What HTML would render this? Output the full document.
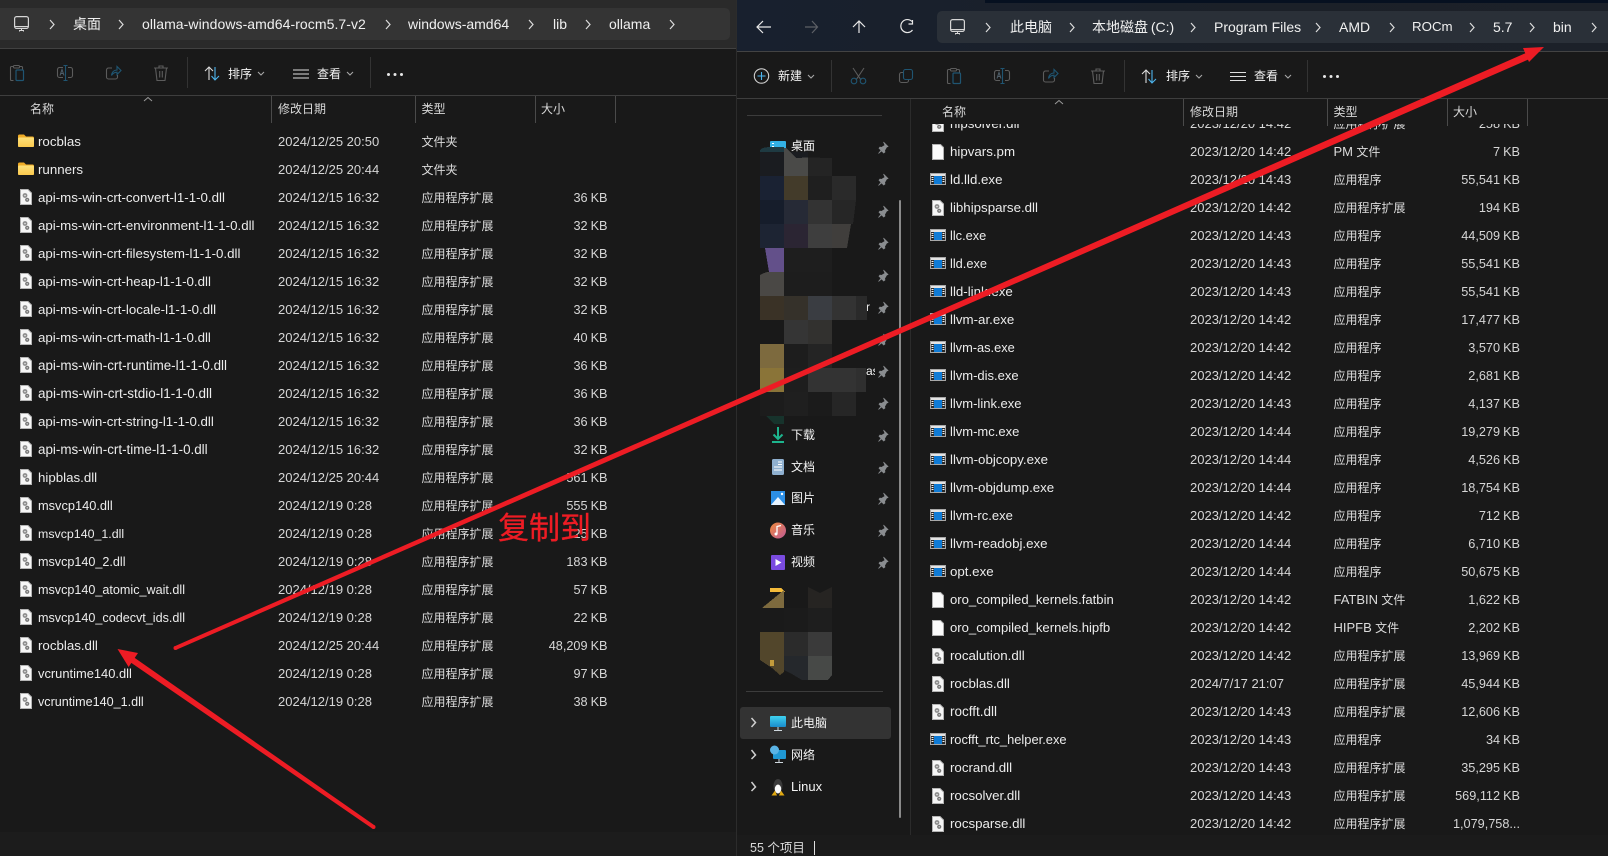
<!DOCTYPE html>
<html><head><meta charset="utf-8"><title>Explorer</title>
<style>
*{box-sizing:border-box}
html,body{margin:0;padding:0;width:1608px;height:856px;overflow:hidden;background:#191919}
body{position:relative;font:13px "Liberation Sans","Noto Sans CJK SC",sans-serif;color:#e8e8e8}
.b{position:absolute}
.t{position:absolute;white-space:nowrap;line-height:20px;height:20px}
.z{font-size:14px;color:#f0f0f0}
.h{font-size:12px;color:#d8d8d8}
.tb{font-size:12px;color:#f4f4f4}
.sep{position:absolute;width:1px;background:#4a4a4a}
.list{position:absolute;overflow:hidden}
.r{position:absolute;left:0;right:0;height:28px;line-height:28px;white-space:nowrap}
.r span{position:absolute;top:0}
.r b{font-weight:400;font-size:13px}
.n{color:#ececec;font-size:13.3px}
.d{color:#d6d6d6;font-size:13px}
.y{color:#dcdcdc;font-size:12px}
.s{color:#d6d6d6;font-size:12.7px;word-spacing:-.5px;text-align:right;width:120px}
#L .n{left:38px}#L .d{left:278px}#L .y{left:421.5px}#L .s{left:487.5px}
#R .n{left:950px}#R .d{left:1190px}#R .y{left:1333.5px}#R .s{left:1400px}
.nav{font-size:12px;color:#f4f4f4}
svg#o{position:absolute;left:0;top:0;z-index:5}
</style></head><body>

<!-- LEFT WINDOW -->
<div class="b" style="left:0;top:0;width:737px;height:48px;background:#2a2a2a"></div>
<div class="b" style="left:0;top:8px;width:730px;height:32px;background:#343434;border-radius:0 5px 5px 0"></div>
<div class="b" style="left:0;top:48px;width:737px;height:1px;background:#414141"></div>
<div class="b" style="left:0;top:95px;width:737px;height:1px;background:#3e3e3e"></div>
<div class="b" style="left:0;top:832px;width:736px;height:24px;background:#1c1c1c"></div>
<div class="t z" style="left:73px;top:14px">桌面</div>
<div class="t z" style="left:142px;top:14px;letter-spacing:.07px">ollama-windows-amd64-rocm5.7-v2</div>
<div class="t z" style="left:408px;top:14px">windows-amd64</div>
<div class="t z" style="left:553px;top:14px">lib</div>
<div class="t z" style="left:609px;top:14px">ollama</div>
<div class="t tb" style="left:228px;top:64px">排序</div>
<div class="t tb" style="left:317px;top:64px">查看</div>
<div class="t h" style="left:30px;top:99px">名称</div>
<div class="t h" style="left:278px;top:99px">修改日期</div>
<div class="t h" style="left:421.5px;top:99px">类型</div>
<div class="t h" style="left:541px;top:99px">大小</div>
<div class="sep" style="left:271px;top:96px;height:27px"></div>
<div class="sep" style="left:415px;top:96px;height:27px"></div>
<div class="sep" style="left:535px;top:96px;height:27px"></div>
<div class="sep" style="left:615px;top:96px;height:27px"></div>

<div class="list" id="L" style="left:0;top:128px;width:736px;height:700px">
<div class="r" style="top:0"><span class="n">rocblas</span><span class="d">2024/12/25 20:50</span><span class="y">文件夹</span></div>
<div class="r" style="top:28px"><span class="n">runners</span><span class="d">2024/12/25 20:44</span><span class="y">文件夹</span></div>
<div class="r" style="top:56px"><span class="n">api-ms-win-crt-convert-l1-1-0.dll</span><span class="d">2024/12/15 16:32</span><span class="y">应用程序扩展</span><span class="s">36 KB</span></div>
<div class="r" style="top:84px"><span class="n">api-ms-win-crt-environment-l1-1-0.dll</span><span class="d">2024/12/15 16:32</span><span class="y">应用程序扩展</span><span class="s">32 KB</span></div>
<div class="r" style="top:112px"><span class="n">api-ms-win-crt-filesystem-l1-1-0.dll</span><span class="d">2024/12/15 16:32</span><span class="y">应用程序扩展</span><span class="s">32 KB</span></div>
<div class="r" style="top:140px"><span class="n">api-ms-win-crt-heap-l1-1-0.dll</span><span class="d">2024/12/15 16:32</span><span class="y">应用程序扩展</span><span class="s">32 KB</span></div>
<div class="r" style="top:168px"><span class="n">api-ms-win-crt-locale-l1-1-0.dll</span><span class="d">2024/12/15 16:32</span><span class="y">应用程序扩展</span><span class="s">32 KB</span></div>
<div class="r" style="top:196px"><span class="n">api-ms-win-crt-math-l1-1-0.dll</span><span class="d">2024/12/15 16:32</span><span class="y">应用程序扩展</span><span class="s">40 KB</span></div>
<div class="r" style="top:224px"><span class="n" style="font-size:13.4px">api-ms-win-crt-runtime-l1-1-0.dll</span><span class="d">2024/12/15 16:32</span><span class="y">应用程序扩展</span><span class="s">36 KB</span></div>
<div class="r" style="top:252px"><span class="n" style="font-size:13.5px">api-ms-win-crt-stdio-l1-1-0.dll</span><span class="d">2024/12/15 16:32</span><span class="y">应用程序扩展</span><span class="s">36 KB</span></div>
<div class="r" style="top:280px"><span class="n">api-ms-win-crt-string-l1-1-0.dll</span><span class="d">2024/12/15 16:32</span><span class="y">应用程序扩展</span><span class="s">36 KB</span></div>
<div class="r" style="top:308px"><span class="n" style="font-size:13.4px">api-ms-win-crt-time-l1-1-0.dll</span><span class="d">2024/12/15 16:32</span><span class="y">应用程序扩展</span><span class="s">32 KB</span></div>
<div class="r" style="top:336px"><span class="n">hipblas.dll</span><span class="d">2024/12/25 20:44</span><span class="y">应用程序扩展</span><span class="s">561 KB</span></div>
<div class="r" style="top:364px"><span class="n" style="font-size:12.8px">msvcp140.dll</span><span class="d">2024/12/19 0:28</span><span class="y">应用程序扩展</span><span class="s">555 KB</span></div>
<div class="r" style="top:392px"><span class="n" style="font-size:12.4px">msvcp140_1.dll</span><span class="d">2024/12/19 0:28</span><span class="y">应用程序扩展</span><span class="s">25 KB</span></div>
<div class="r" style="top:420px"><span class="n" style="font-size:12.6px">msvcp140_2.dll</span><span class="d">2024/12/19 0:28</span><span class="y">应用程序扩展</span><span class="s">183 KB</span></div>
<div class="r" style="top:448px"><span class="n" style="font-size:12.6px">msvcp140_atomic_wait.dll</span><span class="d">2024/12/19 0:28</span><span class="y">应用程序扩展</span><span class="s">57 KB</span></div>
<div class="r" style="top:476px"><span class="n" style="font-size:12.6px">msvcp140_codecvt_ids.dll</span><span class="d">2024/12/19 0:28</span><span class="y">应用程序扩展</span><span class="s">22 KB</span></div>
<div class="r" style="top:504px"><span class="n">rocblas.dll</span><span class="d">2024/12/25 20:44</span><span class="y">应用程序扩展</span><span class="s">48,209 KB</span></div>
<div class="r" style="top:532px"><span class="n" style="font-size:12.9px">vcruntime140.dll</span><span class="d">2024/12/19 0:28</span><span class="y">应用程序扩展</span><span class="s">97 KB</span></div>
<div class="r" style="top:560px"><span class="n" style="font-size:12.6px">vcruntime140_1.dll</span><span class="d">2024/12/19 0:28</span><span class="y">应用程序扩展</span><span class="s">38 KB</span></div>
</div>

<!-- RIGHT WINDOW -->
<div class="b" style="left:736px;top:0;width:872px;height:856px;background:#191919;border-left:1px solid #2c2c2c"></div>
<div class="b" style="left:737px;top:0;width:871px;height:51px;background:linear-gradient(90deg,#18202e,#1b2028 60%,#1c2129)"></div>
<div class="b" style="left:985px;top:0;width:623px;height:3px;background:#061020"></div>
<div class="b" style="left:937px;top:11px;width:671px;height:32px;background:#2a3038;border-radius:5px 0 0 5px"></div>
<div class="b" style="left:737px;top:51px;width:871px;height:1px;background:#434343"></div>
<div class="b" style="left:737px;top:98px;width:871px;height:1px;background:#3e3e3e"></div>
<div class="b" style="left:910px;top:99px;width:1px;height:736px;background:#2b2b2b"></div>
<div class="t z" style="left:1010px;top:17px">此电脑</div>
<div class="t z" style="left:1092px;top:17px;word-spacing:-1px">本地磁盘 (C:)</div>
<div class="t z" style="left:1214px;top:17px">Program Files</div>
<div class="t z" style="left:1339px;top:17px">AMD</div>
<div class="t z" style="left:1412px;top:17px;font-size:13.3px">ROCm</div>
<div class="t z" style="left:1493px;top:17px">5.7</div>
<div class="t z" style="left:1553px;top:17px">bin</div>
<div class="t tb" style="left:778px;top:66px">新建</div>
<div class="t tb" style="left:1166px;top:66px">排序</div>
<div class="t tb" style="left:1254px;top:66px">查看</div>
<div class="t h" style="left:942px;top:102px">名称</div>
<div class="t h" style="left:1190px;top:102px">修改日期</div>
<div class="t h" style="left:1333.5px;top:102px">类型</div>
<div class="t h" style="left:1453px;top:102px">大小</div>
<div class="sep" style="left:1183px;top:99px;height:27px"></div>
<div class="sep" style="left:1327px;top:99px;height:27px"></div>
<div class="sep" style="left:1447px;top:99px;height:27px"></div>
<div class="sep" style="left:1527px;top:99px;height:27px"></div>

<!-- sidebar -->
<div class="b" style="left:747px;top:115px;width:135px;height:1px;background:#3c3c3c"></div>
<div class="b" style="left:746px;top:691px;width:137px;height:1px;background:#3c3c3c"></div>
<div class="b" style="left:740px;top:707px;width:151px;height:32px;background:#333;border-radius:3px"></div>
<div class="b" style="left:899px;top:200px;width:2px;height:618px;background:#8a8a8a;border-radius:1px"></div>
<div class="t nav" style="left:791px;top:136px">桌面</div>
<div class="t nav" style="left:866px;top:297px">r</div>
<div class="t nav" style="left:866px;top:361px;width:9px;overflow:hidden">as</div>
<div class="t nav" style="left:791px;top:425px">下载</div>
<div class="t nav" style="left:791px;top:457px">文档</div>
<div class="t nav" style="left:791px;top:488px">图片</div>
<div class="t nav" style="left:791px;top:520px">音乐</div>
<div class="t nav" style="left:791px;top:552px">视频</div>
<div class="t nav" style="left:791px;top:713px">此电脑</div>
<div class="t nav" style="left:791px;top:745px">网络</div>
<div class="t nav" style="left:791px;top:777px;font-size:13px">Linux</div>

<div class="list" id="R" style="left:911px;top:124px;width:697px;height:711px">
<div style="position:absolute;left:-911px;top:-124px;width:1608px">
<div class="r" style="top:110px"><span class="n">hipsolver.dll</span><span class="d">2023/12/20 14:42</span><span class="y">应用程序扩展</span><span class="s">258 KB</span></div>
<div class="r" style="top:138px"><span class="n">hipvars.pm</span><span class="d">2023/12/20 14:42</span><span class="y"><b>PM</b> 文件</span><span class="s">7 KB</span></div>
<div class="r" style="top:166px"><span class="n">ld.lld.exe</span><span class="d">2023/12/20 14:43</span><span class="y">应用程序</span><span class="s">55,541 KB</span></div>
<div class="r" style="top:194px"><span class="n">libhipsparse.dll</span><span class="d">2023/12/20 14:42</span><span class="y">应用程序扩展</span><span class="s">194 KB</span></div>
<div class="r" style="top:222px"><span class="n" style="font-size:12.8px">llc.exe</span><span class="d">2023/12/20 14:43</span><span class="y">应用程序</span><span class="s">44,509 KB</span></div>
<div class="r" style="top:250px"><span class="n" style="font-size:12.8px">lld.exe</span><span class="d">2023/12/20 14:43</span><span class="y">应用程序</span><span class="s">55,541 KB</span></div>
<div class="r" style="top:278px"><span class="n">lld-link.exe</span><span class="d">2023/12/20 14:43</span><span class="y">应用程序</span><span class="s">55,541 KB</span></div>
<div class="r" style="top:306px"><span class="n">llvm-ar.exe</span><span class="d">2023/12/20 14:42</span><span class="y">应用程序</span><span class="s">17,477 KB</span></div>
<div class="r" style="top:334px"><span class="n" style="font-size:12.8px">llvm-as.exe</span><span class="d">2023/12/20 14:42</span><span class="y">应用程序</span><span class="s">3,570 KB</span></div>
<div class="r" style="top:362px"><span class="n" style="font-size:13px">llvm-dis.exe</span><span class="d">2023/12/20 14:42</span><span class="y">应用程序</span><span class="s">2,681 KB</span></div>
<div class="r" style="top:390px"><span class="n" style="font-size:13px">llvm-link.exe</span><span class="d">2023/12/20 14:43</span><span class="y">应用程序</span><span class="s">4,137 KB</span></div>
<div class="r" style="top:418px"><span class="n" style="font-size:13px">llvm-mc.exe</span><span class="d">2023/12/20 14:44</span><span class="y">应用程序</span><span class="s">19,279 KB</span></div>
<div class="r" style="top:446px"><span class="n">llvm-objcopy.exe</span><span class="d">2023/12/20 14:44</span><span class="y">应用程序</span><span class="s">4,526 KB</span></div>
<div class="r" style="top:474px"><span class="n">llvm-objdump.exe</span><span class="d">2023/12/20 14:44</span><span class="y">应用程序</span><span class="s">18,754 KB</span></div>
<div class="r" style="top:502px"><span class="n" style="font-size:13px">llvm-rc.exe</span><span class="d">2023/12/20 14:42</span><span class="y">应用程序</span><span class="s">712 KB</span></div>
<div class="r" style="top:530px"><span class="n">llvm-readobj.exe</span><span class="d">2023/12/20 14:44</span><span class="y">应用程序</span><span class="s">6,710 KB</span></div>
<div class="r" style="top:558px"><span class="n">opt.exe</span><span class="d">2023/12/20 14:44</span><span class="y">应用程序</span><span class="s">50,675 KB</span></div>
<div class="r" style="top:586px"><span class="n" style="font-size:13.1px">oro_compiled_kernels.fatbin</span><span class="d">2023/12/20 14:42</span><span class="y"><b>FATBIN</b> 文件</span><span class="s">1,622 KB</span></div>
<div class="r" style="top:614px"><span class="n" style="font-size:13.1px">oro_compiled_kernels.hipfb</span><span class="d">2023/12/20 14:42</span><span class="y"><b>HIPFB</b> 文件</span><span class="s">2,202 KB</span></div>
<div class="r" style="top:642px"><span class="n">rocalution.dll</span><span class="d">2023/12/20 14:42</span><span class="y">应用程序扩展</span><span class="s">13,969 KB</span></div>
<div class="r" style="top:670px"><span class="n">rocblas.dll</span><span class="d">2024/7/17 21:07</span><span class="y">应用程序扩展</span><span class="s">45,944 KB</span></div>
<div class="r" style="top:698px"><span class="n" style="font-size:13.5px">rocfft.dll</span><span class="d">2023/12/20 14:43</span><span class="y">应用程序扩展</span><span class="s">12,606 KB</span></div>
<div class="r" style="top:726px"><span class="n" style="font-size:12.9px">rocfft_rtc_helper.exe</span><span class="d">2023/12/20 14:43</span><span class="y">应用程序</span><span class="s">34 KB</span></div>
<div class="r" style="top:754px"><span class="n">rocrand.dll</span><span class="d">2023/12/20 14:43</span><span class="y">应用程序扩展</span><span class="s">35,295 KB</span></div>
<div class="r" style="top:782px"><span class="n">rocsolver.dll</span><span class="d">2023/12/20 14:43</span><span class="y">应用程序扩展</span><span class="s">569,112 KB</span></div>
<div class="r" style="top:810px"><span class="n">rocsparse.dll</span><span class="d">2023/12/20 14:42</span><span class="y">应用程序扩展</span><span class="s">1,079,758...</span></div>
</div></div>

<div class="b" style="left:737px;top:835px;width:871px;height:21px;background:#1b1b1b"></div>
<div class="t" style="left:750px;top:838px;font-size:12.5px;color:#d8d8d8">55 个项目</div>
<div class="b" style="left:814px;top:841px;width:1px;height:14px;background:#e0e0e0"></div>

<svg id="o" width="1608" height="856" viewBox="0 0 1608 856" xmlns="http://www.w3.org/2000/svg">
<defs>
<clipPath id="cp"><rect x="925" y="124" width="30" height="20"/></clipPath>
<linearGradient id="fg" x1="0" y1="0" x2="0" y2="1"><stop offset="0" stop-color="#fde07a"/><stop offset="1" stop-color="#fbc94e"/></linearGradient>
<g id="dl"><path d="M.5.5H8L11.500 4V15.500H.5Z" fill="#f6f6f6" stroke="#b4b4b4"/><circle cx="5" cy="6.500" r="2.400" fill="#8e8e8e"/><circle cx="5" cy="6.500" r=".8" fill="#e8e8e8"/><circle cx="7.200" cy="10.800" r="2.100" fill="#777"/><circle cx="7.200" cy="10.800" r=".7" fill="#ddd"/></g>
<g id="ex"><rect x="0" y="0" width="16" height="12" fill="#a8a8a8"/><rect x="1" y="1" width="14" height="10" fill="#e4e4e4"/><rect x="1" y="3" width="3" height="8" fill="#2a2a2a"/><rect x="12" y="3" width="3" height="8" fill="#2a2a2a"/><rect x="4" y="3" width="8" height="8" fill="#0f7bd6"/><path d="M1.500 4.500h2M1.500 6.500h2M1.500 8.500h2M12.500 4.500h2M12.500 6.500h2M12.500 8.500h2" stroke="#f0f0f0"/></g>
<g id="pg"><path d="M.5.5H8.500L11.500 3.500V15.500H.5Z" fill="#fafafa" stroke="#b0b0b0"/></g>
<g id="fo"><path d="M0 2a1.500 1.500 0 0 1 1.500-1.500H6L8 2.500H14.500A1.500 1.500 0 0 1 16 4V11.500A1.500 1.500 0 0 1 14.500 13H1.500A1.500 1.500 0 0 1 0 11.500Z" fill="#f0ac26"/><rect x="0" y="3.500" width="16" height="9.500" rx="1.300" fill="url(#fg)"/></g>
<g id="pin"><path d="M6.500 1 11 5.500 9.700 6 7.600 9.600 8 11 6.700 12 4.600 9.900 1.500 12.500 4 9.300 2 7.200 3 6 4.400 6.400 8 4.300Z" fill="#8a8d90" stroke="#8a8d90" stroke-width=".7"/></g>
<path id="cv" d="M0 0 4 4.500 0 9" fill="none" stroke="#dcdcdc" stroke-width="1.200"/>
<path id="dn" d="M0 0 3 3 6 0" fill="none" stroke="#a8a8a8" stroke-width="1.100"/>
<g id="mon"><rect x=".6" y=".6" width="13.800" height="11.800" rx="2" fill="none" stroke="#d6d6d6" stroke-width="1.200"/><path d="M1 10.500H14" stroke="#d6d6d6"/><path d="M5 14.500H10M7.500 12.500V14.500M5.500 14.500v1M9.500 14.500v1" stroke="#d6d6d6"/></g>
<g id="paste" fill="none"><path d="M3.500 15.500H1.500a1 1 0 0 1-1-1V2.500a1 1 0 0 1 1-1H3M10 1.500H11.500a1 1 0 0 1 1 1V5" stroke="#5c5c5c" stroke-width="1.100"/><rect x="3.500" y=".5" width="6" height="2.500" rx="1" stroke="#5c5c5c"/><rect x="6" y="5" width="7.500" height="10.500" rx="1" stroke="#1f5572" stroke-width="1.200"/></g>
<g id="ren" fill="none"><path d="M6 2.500H2.500a2 2 0 0 0-2 2v6a2 2 0 0 0 2 2H6M11 2.500h2.500a2 2 0 0 1 2 2v6a2 2 0 0 1-2 2H11" stroke="#5c5c5c" stroke-width="1.100"/><path d="M8.500.5V15.500M6.500.5H10.500M6.500 15.500H10.500" stroke="#1f5572" stroke-width="1.100"/><path d="M3 10.500 5 4.500 7 10.500M3.800 8.500H6.200" stroke="#4f5f6a" stroke-width="1"/></g>
<g id="sh" fill="none"><path d="M6 3H2.500a2 2 0 0 0-2 2v7a2 2 0 0 0 2 2h7a2 2 0 0 0 2-2V10" stroke="#5c5c5c" stroke-width="1.100"/><path d="M5.500 10.500C6 6.500 8.500 5 11 5V1.500L15 5.500 11 9.500V7.200C8.700 7.200 7 8 5.500 10.500Z" stroke="#1f5572" stroke-width="1.100"/></g>
<g id="del" fill="none" stroke="#5c5c5c" stroke-width="1.100"><path d="M0 3H14M5 3V1H9V3M1.500 3 3 15.500H11L12.500 3M5.700 6V12.500M8.300 6V12.500"/></g>
<g id="srt" fill="none" stroke-width="1.100"><path d="M5 14V1M1 5 5 1 9 5" stroke="#dcdcdc"/><path d="M11 1V14M7.500 10 11 14 15 10" stroke="#4db5ee"/></g>
<g id="vw" stroke="#e0e0e0" stroke-width="1"><path d="M0 .5H16M0 4.500H16M0 8.500H16"/></g>
<g id="dots" fill="#e6e6e6"><circle cx="1.500" cy="1.500" r="1.500"/><circle cx="8" cy="1.500" r="1.500"/><circle cx="14.500" cy="1.500" r="1.500"/></g>
</defs>

<!-- left chrome icons -->
<use href="#mon" x="14" y="16"/>
<use href="#cv" x="50" y="20"/><use href="#cv" x="119" y="20"/><use href="#cv" x="386" y="20"/><use href="#cv" x="529" y="20"/><use href="#cv" x="586" y="20"/><use href="#cv" x="670" y="20"/>
<use href="#paste" x="10" y="65"/><use href="#ren" x="57" y="65"/><use href="#sh" x="106" y="65"/><use href="#del" x="154" y="65"/>
<path d="M187.500 57V88M370.500 57V88" stroke="#333"/>
<use href="#srt" x="204" y="66"/><use href="#dn" x="258" y="72"/>
<use href="#vw" x="293" y="69.500"/><use href="#dn" x="347" y="72"/>
<use href="#dots" x="387" y="73"/>
<path d="M144 101 148 97.500 152 101" fill="none" stroke="#9a9a9a"/>

<!-- left file icons -->
<use href="#fo" x="18" y="134"/><use href="#fo" x="18" y="162"/>
<use href="#dl" x="20" y="189"/><use href="#dl" x="20" y="217"/><use href="#dl" x="20" y="245"/><use href="#dl" x="20" y="273"/><use href="#dl" x="20" y="301"/><use href="#dl" x="20" y="329"/><use href="#dl" x="20" y="357"/><use href="#dl" x="20" y="385"/><use href="#dl" x="20" y="413"/><use href="#dl" x="20" y="441"/><use href="#dl" x="20" y="469"/><use href="#dl" x="20" y="497"/><use href="#dl" x="20" y="525"/><use href="#dl" x="20" y="553"/><use href="#dl" x="20" y="581"/><use href="#dl" x="20" y="609"/><use href="#dl" x="20" y="637"/><use href="#dl" x="20" y="665"/><use href="#dl" x="20" y="693"/>

<!-- right nav icons -->
<g fill="none" stroke-width="1.200">
<path d="M771 27H757M763 21 757 27 763 33" stroke="#e8e8e8"/>
<path d="M805 27H817M812 21 817.500 27 812 33" stroke="#5d6066"/>
<path d="M859 33V21M853 27 859 21 865 27" stroke="#e8e8e8"/>
<path d="M912 21.500A6.500 6.500 0 1 0 912.500 30M912.500 20V24H908.500" stroke="#e8e8e8"/>
</g>
<use href="#mon" x="950" y="19"/>
<use href="#cv" x="986" y="23"/><use href="#cv" x="1070" y="23"/><use href="#cv" x="1191" y="23"/><use href="#cv" x="1316" y="23"/><use href="#cv" x="1390" y="23"/><use href="#cv" x="1470" y="23"/><use href="#cv" x="1530" y="23"/><use href="#cv" x="1592" y="23"/>

<!-- right toolbar -->
<circle cx="761.500" cy="76" r="7.200" fill="none" stroke="#d0d0d0" stroke-width="1.100"/><path d="M761.500 72V80M757.500 76H765.500" stroke="#4db5ee" stroke-width="1.100"/>
<use href="#dn" x="808" y="75"/>
<path d="M831.500 60V92M1124.500 60V92M1307.500 60V92" stroke="#333"/>
<g fill="none" stroke-width="1.100"><path d="M853 68 861 80M864 68 856 80" stroke="#5c5c5c"/><circle cx="854" cy="81" r="2.800" stroke="#1f5572"/><circle cx="863" cy="81" r="2.800" stroke="#1f5572"/>
<rect x="899.500" y="72.500" width="9" height="10" rx="2" stroke="#5c5c5c"/><rect x="903.500" y="69.500" width="9" height="10" rx="2" stroke="#1f5572" fill="#191919"/></g>
<use href="#paste" x="947" y="68"/><use href="#ren" x="994" y="68"/><use href="#sh" x="1043" y="68"/><use href="#del" x="1091" y="68"/>
<use href="#srt" x="1141" y="69"/><use href="#dn" x="1196" y="75"/>
<use href="#vw" x="1230" y="72"/><use href="#dn" x="1285" y="75"/>
<use href="#dots" x="1323" y="75"/>
<path d="M1055 104 1059 100.500 1063 104" fill="none" stroke="#9a9a9a"/>

<!-- right file icons -->
<g clip-path="url(#cp)"><use href="#dl" x="932" y="116"/></g>
<use href="#pg" x="932" y="144"/>
<use href="#ex" x="930" y="173"/><use href="#dl" x="932" y="200"/><use href="#ex" x="930" y="229"/><use href="#ex" x="930" y="257"/><use href="#ex" x="930" y="285"/><use href="#ex" x="930" y="313"/><use href="#ex" x="930" y="341"/><use href="#ex" x="930" y="369"/><use href="#ex" x="930" y="397"/><use href="#ex" x="930" y="425"/><use href="#ex" x="930" y="453"/><use href="#ex" x="930" y="481"/><use href="#ex" x="930" y="509"/><use href="#ex" x="930" y="537"/><use href="#ex" x="930" y="565"/>
<use href="#pg" x="932" y="592"/><use href="#pg" x="932" y="620"/><use href="#dl" x="932" y="648"/><use href="#dl" x="932" y="676"/><use href="#dl" x="932" y="704"/><use href="#ex" x="930" y="733"/><use href="#dl" x="932" y="760"/><use href="#dl" x="932" y="788"/><use href="#dl" x="932" y="816"/>

<!-- sidebar icons -->
<use href="#pin" x="877" y="141"/><use href="#pin" x="877" y="173"/><use href="#pin" x="877" y="205"/><use href="#pin" x="877" y="237"/><use href="#pin" x="877" y="269"/><use href="#pin" x="877" y="301"/><use href="#pin" x="877" y="333"/><use href="#pin" x="877" y="365"/><use href="#pin" x="877" y="397"/><use href="#pin" x="877" y="429"/><use href="#pin" x="877" y="461"/><use href="#pin" x="877" y="492"/><use href="#pin" x="877" y="524"/><use href="#pin" x="877" y="556"/>
<rect x="770" y="141" width="16" height="12" rx="1" fill="#33b0e4"/><path d="M772 143h2v1h-2zM772 146h2v1h-2z" fill="#fff"/>
<path d="M778 427V439M773.500 434.500 778 439 782.500 434.500" fill="none" stroke="#1db48d" stroke-width="2"/><rect x="772" y="441" width="12" height="2" fill="#1db48d"/>
<rect x="772" y="459" width="12" height="16" rx="1.500" fill="#8fb0d0"/><path d="M778 462h4M778 464.500h4M774 467h8M774 470h8" stroke="#fff"/>
<rect x="771" y="491" width="14" height="14" fill="#2c8fe6"/><path d="M771 505 778 497 785 505Z" fill="#e9f4ff"/><circle cx="782" cy="494" r="1.200" fill="#fff"/>
<defs><linearGradient id="mg" x1="0" y1="0" x2="1" y2="1"><stop offset="0" stop-color="#ee8a3c"/><stop offset="1" stop-color="#c05a96"/></linearGradient><linearGradient id="pc" x1="0" y1="0" x2="0" y2="1"><stop offset="0" stop-color="#3fd2f0"/><stop offset="1" stop-color="#1a8ccc"/></linearGradient></defs>
<circle cx="778" cy="530.500" r="8" fill="url(#mg)"/><path d="M777 534V526.500L781 525.500" fill="none" stroke="#fff" stroke-width="1.300"/><circle cx="776" cy="534" r="1.500" fill="#fff"/>
<rect x="771" y="555" width="14" height="15" rx="1" fill="#7a4be0"/><path d="M775.500 559 781.500 562.500 775.500 566Z" fill="#fff"/>
<rect x="770" y="716" width="16" height="11" rx="1" fill="url(#pc)"/><path d="M778 727V730M774 730.500H782" stroke="#cfd8de"/>
<rect x="773" y="750" width="13" height="9" rx="1" fill="#1f98d4"/><circle cx="774.500" cy="750" r="4.500" fill="#5ab4e6"/><path d="M779 759V762M775 762.500H783" stroke="#cfd8de"/>
<ellipse cx="778" cy="786" rx="4.500" ry="7" fill="#3a3a3a"/><ellipse cx="778" cy="789" rx="3.200" ry="4.500" fill="#fafafa"/><path d="M771.500 795.500 775 790.500 777 795.500ZM784.500 795.500 781 790.500 779 795.500Z" fill="#e0a810"/>
<g fill="none" stroke="#d0d0d0" stroke-width="1.500"><path d="M751.500 718 755.500 722.500 751.500 727"/><path d="M751.500 750 755.500 755 751.500 759"/><path d="M751.500 782 755.500 787 751.500 791"/></g>

<!-- pixelated mosaic -->
<g shape-rendering="crispEdges">
<path d="M760 176V150Q762 147 772 147H782L790 152H808V176Z" fill="#1a1c20"/>
<path d="M760 150Q762 147 772 147H784V152H760Z" fill="#1e3a42"/>
<path d="M784 148H786L796 158 808 157.500V176H784Z" fill="#4a4a48"/>
<path d="M808 157.500 832 158V176H808Z" fill="#242424"/><rect x="832" y="176" width="24" height="24" fill="#2a2a2a"/>
<rect x="760" y="176" width="24" height="24" fill="#1a2233"/><rect x="784" y="176" width="24" height="24" fill="#433b2a"/><rect x="808" y="176" width="24" height="24" fill="#1f1f1f"/>
<rect x="760" y="200" width="24" height="24" fill="#161d2b"/><rect x="784" y="200" width="24" height="24" fill="#262a36"/><rect x="808" y="200" width="24" height="24" fill="#333"/><path d="M832 200H856L853 224H832Z" fill="#262626"/>
<rect x="760" y="224" width="24" height="24" fill="#1d2433"/><rect x="784" y="224" width="24" height="24" fill="#2b2533"/><rect x="808" y="224" width="24" height="24" fill="#3e3e3e"/><path d="M832 224H851L847 248H832Z" fill="#403e3c"/>
<path d="M765 248H784V272H769Z" fill="#63508a"/><rect x="784" y="248" width="48" height="24" fill="#1e1e1e"/>
<path d="M760 275Q765 272 769 272H784V296H760Z" fill="#4a4845"/><rect x="784" y="272" width="48" height="24" fill="#1d1d1d"/>
<rect x="760" y="296" width="24" height="24" fill="#3a3226"/><rect x="784" y="296" width="24" height="24" fill="#35312a"/><rect x="808" y="296" width="24" height="24" fill="#3a3d42"/><rect x="832" y="296" width="24" height="24" fill="#333"/><rect x="856" y="296" width="11" height="24" fill="#2a2a2a"/>
<rect x="784" y="320" width="24" height="24" fill="#353535"/><rect x="808" y="320" width="24" height="24" fill="#32312f"/>
<rect x="760" y="344" width="24" height="24" fill="#7d6a3e"/><rect x="784" y="344" width="24" height="24" fill="#1d1d1d"/><rect x="808" y="344" width="24" height="24" fill="#242424"/>
<rect x="760" y="368" width="24" height="24" fill="#8a7438"/><rect x="784" y="368" width="24" height="24" fill="#1e1e1e"/><rect x="808" y="368" width="48" height="24" fill="#333"/><rect x="856" y="368" width="10" height="24" fill="#2f2f2f"/>
<rect x="760" y="392" width="24" height="24" fill="#1c1c1c"/><rect x="784" y="392" width="24" height="24" fill="#1f1f1f"/><rect x="808" y="392" width="24" height="24" fill="#1b1b1b"/><rect x="832" y="392" width="24" height="24" fill="#262626"/>
<path d="M766 416H784V424H774Z" fill="#17332c"/>
<!-- lower -->
<path d="M770 588H781L785 592H770Z" fill="#f4bb3a"/>
<path d="M762 608 784 590V608Z" fill="#7d6a3e"/>
<path d="M808 587 820 593 832 587V608H808Z" fill="#262422"/>
<rect x="760" y="608" width="24" height="24" fill="#1a1a1a"/><rect x="784" y="608" width="24" height="24" fill="#1b1b1b"/><rect x="808" y="608" width="24" height="24" fill="#1e1e1e"/>
<rect x="760" y="632" width="24" height="24" fill="#52462b"/><rect x="784" y="632" width="24" height="24" fill="#2b2b2b"/><rect x="808" y="632" width="24" height="24" fill="#3a3a3a"/>
<path d="M760 656H784V672L780 675 772 668 760 660Z" fill="#52462b"/><path d="M784 656H808V680H802L792 674 784 670Z" fill="#25282c"/><path d="M808 656H832V675L828 680H808Z" fill="#474947"/>
<rect x="770" y="660" width="4" height="6" fill="#e0b040" opacity=".8"/>
</g>

<!-- annotation -->
<g fill="#ed1c24">
<circle cx="175.500" cy="648" r="2"/>
<polygon points="176.300,649.800 174.700,646.200 1528.600,51.800 1531.400,58.200"/>
<polygon points="1544,47 1523,48 1529,62"/>
<circle cx="373.500" cy="827" r="2"/>
<polygon points="374.600,825.400 372.400,828.600 129.300,661.500 132.700,656.500"/>
<polygon points="117.500,649 138,653 128.600,667"/>
<text x="498" y="539" font-size="31" font-family="'Noto Sans CJK SC','Liberation Sans',sans-serif" font-weight="400" stroke="#ed1c24" stroke-width=".3">复制到</text>
</g>
</svg>
</body></html>
